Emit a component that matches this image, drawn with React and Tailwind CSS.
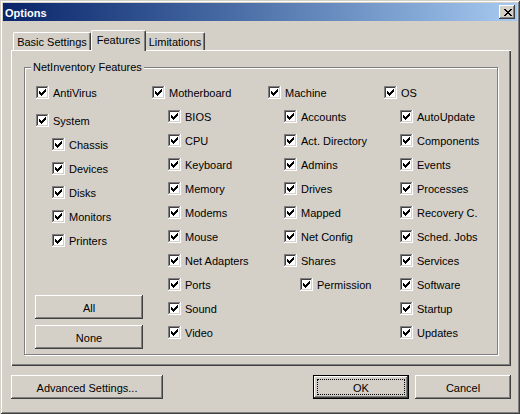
import React from "react";

const CHECK_COLS = [
  [3, 5], [4, 6], [5, 7], [6, 6], [7, 5], [8, 4], [9, 3],
];

function Check() {
  return (
    <svg width="13" height="13" viewBox="0 0 13 13" shapeRendering="crispEdges" className="shrink-0">
      <rect x="0" y="0" width="13" height="13" fill="#ffffff" />
      <rect x="0" y="0" width="12" height="1" fill="#808080" />
      <rect x="0" y="0" width="1" height="12" fill="#808080" />
      <rect x="1" y="1" width="10" height="1" fill="#404040" />
      <rect x="1" y="1" width="1" height="10" fill="#404040" />
      <rect x="1" y="11" width="11" height="1" fill="#d4d0c8" />
      <rect x="11" y="1" width="1" height="11" fill="#d4d0c8" />
      {CHECK_COLS.map(([x, y]) => (
        <rect key={x} x={x} y={y} width="1" height="3" fill="#000000" />
      ))}
    </svg>
  );
}

function Row({ label, indent = 0, className = "" }) {
  const ml = indent === 1 ? "ml-[16px]" : indent === 2 ? "ml-[32px]" : "";
  return (
    <div className={`flex items-center h-[24px] gap-[4px] ${ml} ${className}`}>
      <Check />
      <span className="leading-[13px] whitespace-nowrap mt-[2px]">{label}</span>
    </div>
  );
}

const BTN =
  "flex items-center justify-center bg-[#d4d0c8] shadow-[inset_-1px_-1px_0_#404040,inset_1px_1px_0_#ffffff,inset_-2px_-2px_0_#808080]";

function CloseGlyph() {
  const rows = [0, 1, 2, 3, 4, 5, 6];
  return (
    <svg width="8" height="7" viewBox="0 0 8 7" shapeRendering="crispEdges">
      {rows.map((i) => (
        <g key={i}>
          <rect x={i} y={i} width="2" height="1" fill="#000" />
          <rect x={6 - i} y={i} width="2" height="1" fill="#000" />
        </g>
      ))}
    </svg>
  );
}

export default function App() {
  const mother = ["BIOS", "CPU", "Keyboard", "Memory", "Modems", "Mouse", "Net Adapters", "Ports", "Sound", "Video"];
  const machine = ["Accounts", "Act. Directory", "Admins", "Drives", "Mapped", "Net Config", "Shares"];
  const os = ["AutoUpdate", "Components", "Events", "Processes", "Recovery C.", "Sched. Jobs", "Services", "Software", "Startup", "Updates"];

  return (
    <div className="w-[520px] h-[414px] bg-[#d4d0c8] p-[3px] flex flex-col text-[11px] text-black font-['Liberation_Sans',Arial,sans-serif] shadow-[inset_1px_1px_0_#d4d0c8,inset_-1px_-1px_0_#404040,inset_2px_2px_0_#ffffff,inset_-2px_-2px_0_#808080]">
      {/* Title bar */}
      <div className="h-[18px] flex items-center justify-between pl-[2px] pr-[2px] bg-gradient-to-r from-[#0a246a] to-[#a6caf0]">
        <span className="text-white font-bold leading-[13px] mt-[2px]">Options</span>
        <div className={`${BTN} w-[16px] h-[14px] pl-[1px]`}>
          <CloseGlyph />
        </div>
      </div>

      {/* Tabs */}
      <div className="pl-[8px] mt-[9px]">
        <div className="flex items-end h-[20px] pl-[2px]">
          <div className="w-[78px] h-[18px] flex justify-center pt-[3px] border-t border-l border-r border-t-white border-l-white border-r-[#404040] rounded-t-[2px] shadow-[inset_-1px_0_0_#808080]">
            <span className="leading-[13px]">Basic Settings</span>
          </div>
          <div className="relative z-10 w-[55px] h-[21px] -mb-[1px] bg-[#d4d0c8] flex justify-center pt-[3px] border-t border-l border-r border-t-white border-l-white border-r-[#404040] rounded-t-[2px] shadow-[inset_-1px_0_0_#808080]">
            <span className="leading-[13px]">Features</span>
          </div>
          <div className="w-[59px] h-[18px] flex justify-center pt-[3px] border-t border-r border-t-white border-r-[#404040] rounded-tr-[2px] shadow-[inset_-1px_0_0_#808080]">
            <span className="leading-[13px]">Limitations</span>
          </div>
        </div>

        {/* Panel */}
        <div className="w-[500px] h-[316px] pt-[17px] pl-[13px] shadow-[inset_1px_1px_0_#ffffff,inset_-1px_-1px_0_#404040,inset_-2px_-2px_0_#808080]">
          <div className="relative w-[474px] h-[288px] border border-[#808080] shadow-[1px_1px_0_#ffffff,inset_1px_1px_0_#ffffff] pt-[12px] pl-[11px]">
            <span className="absolute -top-[7px] left-[6px] px-[2px] bg-[#d4d0c8] leading-[13px]">
              NetInventory Features
            </span>
            <div className="flex">
              <div className="w-[116px] flex flex-col">
                <Row label="AntiVirus" />
                <Row label="System" className="mt-[4px]" />
                {["Chassis", "Devices", "Disks", "Monitors", "Printers"].map((l) => (
                  <Row key={l} label={l} indent={1} />
                ))}
                <div className={`${BTN} w-[108px] h-[24px] -ml-[1px] mt-[43px]`}>
                  <span className="leading-[13px] mt-[2px]">All</span>
                </div>
                <div className={`${BTN} w-[108px] h-[24px] -ml-[1px] mt-[6px]`}>
                  <span className="leading-[13px] mt-[2px]">None</span>
                </div>
              </div>
              <div className="w-[116px] flex flex-col">
                <Row label="Motherboard" />
                {mother.map((l) => (
                  <Row key={l} label={l} indent={1} />
                ))}
              </div>
              <div className="w-[116px] flex flex-col">
                <Row label="Machine" />
                {machine.map((l) => (
                  <Row key={l} label={l} indent={1} />
                ))}
                <Row label="Permission" indent={2} />
              </div>
              <div className="w-[100px] flex flex-col">
                <Row label="OS" />
                {os.map((l) => (
                  <Row key={l} label={l} indent={1} />
                ))}
              </div>
            </div>
          </div>
        </div>

        {/* Bottom buttons */}
        <div className="flex items-start mt-[9px] w-[500px]">
          <div className={`${BTN} w-[152px] h-[24px]`}>
            <span className="leading-[13px] mt-[2px]">Advanced Settings...</span>
          </div>
          <div className="flex-1" />
          <div className="w-[96px] h-[24px] border border-black">
            <div className={`${BTN} w-full h-full p-[3px]`}>
              <div className="w-full h-full border border-dotted border-black flex items-center justify-center">
                <span className="leading-[13px] mt-[2px]">OK</span>
              </div>
            </div>
          </div>
          <div className={`${BTN} w-[96px] h-[24px] ml-[6px]`}>
            <span className="leading-[13px] mt-[2px]">Cancel</span>
          </div>
        </div>
      </div>
    </div>
  );
}
